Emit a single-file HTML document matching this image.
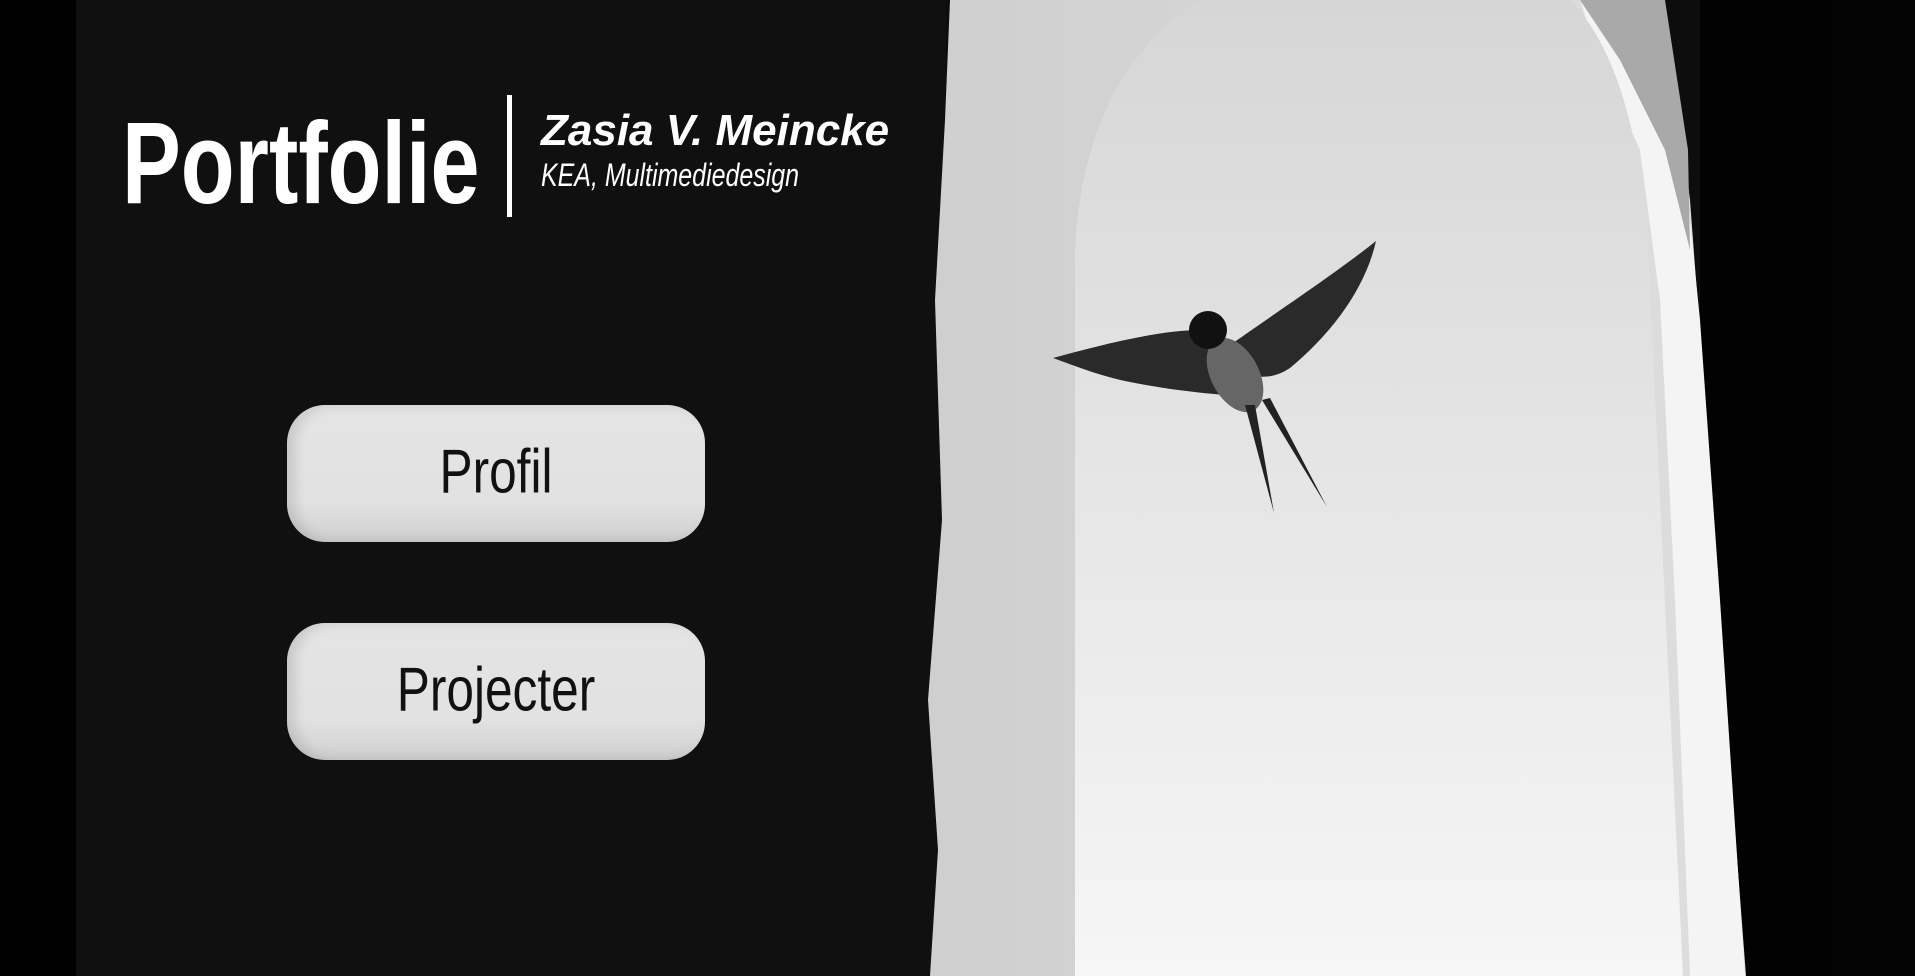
<!DOCTYPE html>
<html><head><meta charset="utf-8"><style>
html,body{margin:0;padding:0;width:1915px;height:976px;overflow:hidden;background:#0d0d0d;font-family:"Liberation Sans",sans-serif}
.bg{position:absolute;left:0;top:0}
.t{position:absolute;white-space:nowrap;color:#fff;transform-origin:0 0}
.btn{position:absolute;left:287px;width:418px;height:137px;border-radius:38px;background:linear-gradient(#e4e4e4 0%,#e2e2e2 70%,#cfcfcf 100%);box-shadow:inset 8px 0 12px rgba(0,0,0,.12)}
.btn span{position:absolute;left:50%;top:50%;font-size:62px;color:#111;white-space:nowrap;transform:translate(-50%,-53%) scaleX(.8)}
</style></head><body>
<svg class="bg" width="1915" height="976" viewBox="0 0 1915 976">
<defs>
<linearGradient id="sky" x1="0" y1="0" x2="0" y2="1"><stop offset="0" stop-color="#d6d6d6"/><stop offset=".6" stop-color="#e9e9e9"/><stop offset="1" stop-color="#f6f6f6"/></linearGradient>
<linearGradient id="wall" x1="0" y1="0" x2="1" y2="0"><stop offset="0" stop-color="#cfcfcf"/><stop offset="1" stop-color="#dedede"/></linearGradient>
</defs>
<rect x="0" y="0" width="76" height="976" fill="#000"/>
<rect x="76" y="0" width="870" height="976" fill="#101010"/>
<rect x="1832" y="0" width="83" height="976" fill="#040404"/>
<rect x="1700" y="0" width="132" height="976" fill="#020202"/>
<path d="M950 0 L1655 0 L1672 60 L1690 200 L1705 400 L1725 700 L1746 976 L930 976 L938 850 L928 700 L942 520 L935 300 L945 120 Z" fill="url(#wall)"/>
<path d="M1580 0 L1660 0 L1680 120 L1700 320 L1720 600 L1745 976 L1690 976 L1675 600 L1660 300 L1640 150 L1600 60 Z" fill="#f4f4f4"/>
<path d="M1580 0 L1665 0 L1688 150 L1690 250 L1665 150 L1620 60 Z" fill="#a9a9a9"/>
<path d="M1075 976 L1075 250 C1080 140 1120 50 1200 0 L1570 0 C1610 40 1640 120 1648 250 L1683 976 Z" fill="url(#sky)"/>
<g fill="#2a2a2a">
<path d="M1053 358 C1100 345 1160 330 1200 330 L1230 360 L1225 395 C1190 392 1160 388 1130 382 C1100 376 1075 366 1053 358 Z"/>
<path d="M1230 345 C1280 310 1340 270 1376 241 C1365 290 1330 335 1290 368 C1275 378 1262 378 1250 375 Z"/>
<ellipse cx="1235" cy="375" rx="24" ry="40" transform="rotate(-28 1235 375)" fill="#666"/>
<circle cx="1208" cy="330" r="19" fill="#111"/>
<path d="M1245 405 L1274 513 L1255 405 Z M1262 400 L1327 507 L1270 398 Z" fill="#222"/>
</g>
</svg>
<div class="t" style="left:122px;top:96px;font-size:116px;font-weight:bold;transform:scaleX(.76)">Portfolie</div>
<div style="position:absolute;left:507px;top:95px;width:5px;height:122px;background:#fff"></div>
<div class="t" style="left:541px;top:106px;font-size:44px;font-weight:bold;font-style:italic">Zasia V. Meincke</div>
<div class="t" style="left:541px;top:157px;font-size:32px;font-style:italic;transform:scaleX(.78)">KEA, Multimediedesign</div>
<div class="btn" style="top:405px"><span>Profil</span></div>
<div class="btn" style="top:623px"><span>Projecter</span></div>
</body></html>
